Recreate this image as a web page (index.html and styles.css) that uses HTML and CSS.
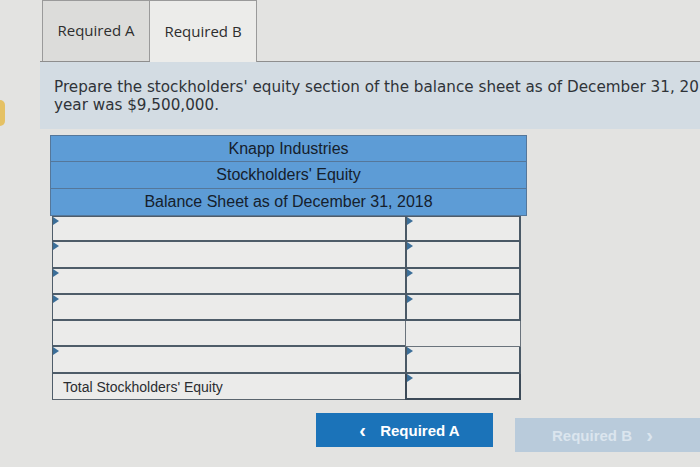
FILE: index.html
```html
<!DOCTYPE html>
<html>
<head>
<meta charset="utf-8">
<link rel="stylesheet" href="styles.css">
</head>
<body>
<div class="page">
  <div class="gutter"><span class="dot"></span></div>
  <div class="main">
    <div class="tabs">
      <div class="tab">Required A</div>
      <div class="tab active">Required B</div>
    </div>
    <div class="prompt">
      <p class="line">Prepare the stockholders' equity section of the balance sheet as of December 31, 2018. Net income for the</p>
      <p class="line">year was $9,500,000.</p>
    </div>
    <div class="sheet">
      <div class="hdr">Knapp Industries</div>
      <div class="hdr">Stockholders' Equity</div>
      <div class="hdr">Balance Sheet as of December 31, 2018</div>
      <div class="row"><div class="cl mk"></div><div class="cr mk"></div></div>
      <div class="row"><div class="cl mk"></div><div class="cr mk"></div></div>
      <div class="row"><div class="cl mk"></div><div class="cr mk"></div></div>
      <div class="row"><div class="cl mk"></div><div class="cr mk"></div></div>
      <div class="row"><div class="cl"></div><div class="cr plain"></div></div>
      <div class="row"><div class="cl mk"></div><div class="cr mk"></div></div>
      <div class="row total"><div class="cl">Total Stockholders' Equity</div><div class="cr mk"></div></div>
    </div>
    <div class="nav">
      <button class="btn prev"><span class="chev">&lsaquo;</span> Required A</button>
      <button class="btn next">Required B <span class="chev">&rsaquo;</span></button>
    </div>
  </div>
</div>
</body>
</html>
```
FILE: styles.css
```css
html, body {
  margin: 0;
  padding: 0;
}
body {
  width: 700px;
  height: 467px;
  overflow: hidden;
  background: #e3e3e1;
}
.page {
  display: flex;
  height: 467px;
}
.gutter {
  width: 40px;
  flex: none;
  display: flex;
  flex-direction: column;
  padding-top: 100px;
  box-sizing: border-box;
}
.dot {
  display: block;
  width: 5px;
  height: 26px;
  background: #e5b63a;
  border-radius: 0 13px 13px 0;
  opacity: 0.75;
}
.main {
  flex: none;
  width: 760px;
}
.tabs {
  display: flex;
  height: 62px;
  padding-left: 2px;
  border-bottom: 1px solid #8e8e8e;
  box-sizing: border-box;
}
.tab {
  width: 108px;
  height: 61px;
  box-sizing: border-box;
  border: 1px solid #9a9a9a;
  border-bottom: none;
  background: #dcdcda;
  font-family: "Open Sans", sans-serif;
  font-size: 15px;
  color: #2e2e2e;
  display: flex;
  align-items: center;
  justify-content: center;
  padding-bottom: 2px;
}
.tab.active {
  width: 107px;
  height: 62px;
  border-left: none;
  background: #ececea;
}
.prompt {
  background: #d3dce3;
  height: 67px;
  box-sizing: border-box;
  padding: 16px 0 0 14px;
}
.line {
  margin: 0;
  white-space: nowrap;
  font-family: "DejaVu Sans", sans-serif;
  font-size: 15.2px;
  line-height: 18px;
  color: #2f3338;
}
.sheet {
  margin: 6px 0 0 10px;
  width: 477px;
}
.hdr {
  height: 27px;
  box-sizing: border-box;
  background: #5d9cd6;
  border: 1px solid #55779a;
  border-top: none;
  font-family: "Liberation Sans", sans-serif;
  font-size: 16px;
  color: #15202c;
  display: flex;
  align-items: center;
  justify-content: center;
}
.hdr:first-child {
  border-top: 1px solid #55779a;
}
.row {
  display: flex;
  height: 26.3px;
  margin-left: 2px;
  margin-right: 6px;
}
.cl, .cr {
  position: relative;
  box-sizing: border-box;
  background: #ebebea;
}
.cl {
  width: 353px;
  border-left: 1px solid #4f5d6a;
  border-bottom: 2px solid #4e5c69;
}
.cr {
  flex: 1;
  border: 2px solid #4a5966;
  border-top: none;
}
.cr.plain {
  border-width: 0 1px 1px 1px;
  border-color: #6a737c;
}
.row:nth-child(4) .cl, .row:nth-child(4) .cr {
  border-top: 1px solid #4f5d6a;
}
.mk::before {
  content: "";
  position: absolute;
  left: 0;
  top: 0;
  border-style: solid;
  border-width: 4px 0 4px 6px;
  border-color: transparent transparent transparent #3b6e98;
}
.row.total .cl {
  font-family: "Liberation Sans", sans-serif;
  font-size: 14px;
  color: #2a2d31;
  padding: 5px 0 0 10px;
  border-bottom: 1px solid #5a646e;
}
.row.total .cr {
  border-color: #3c4a58;
}
.nav {
  display: flex;
  align-items: flex-start;
  margin-top: 13px;
  padding-left: 276px;
  gap: 22px;
}
.btn {
  border: none;
  height: 34px;
  font-family: "Liberation Sans", sans-serif;
  font-weight: bold;
  font-size: 15px;
  cursor: pointer;
}
.btn.prev {
  width: 177px;
  background: #1b73b9;
  color: #ffffff;
}
.btn.next {
  width: 200px;
  margin-top: 5px;
  background: #b9cbdb;
  color: #dbe5ee;
  text-align: left;
  padding-left: 37px;
}
.chev {
  font-size: 20px;
  margin: 0 10px;
  vertical-align: -1px;
}
```
